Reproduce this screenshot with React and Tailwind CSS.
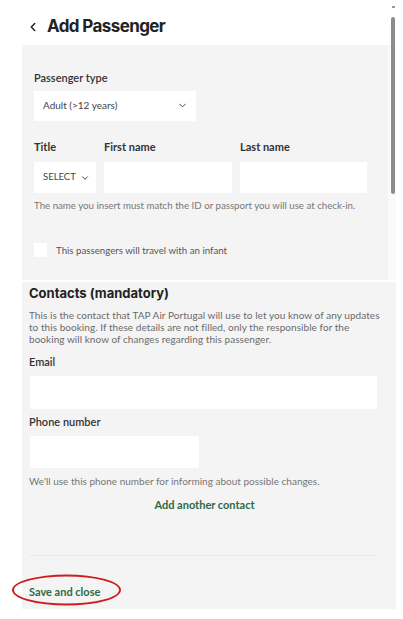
import { ChevronLeft, ChevronDown } from "lucide-react";

const lato = { fontFamily: "Lato, 'Open Sans', sans-serif" };

function Label({ children, className = "" }) {
  return <div className={`text-[11px] font-bold text-[#333] ${className}`}>{children}</div>;
}

function App() {
  return (
    <div className="relative w-[403px] h-[619px] bg-white overflow-hidden font-['Lato',sans-serif]">
      {/* scrollbar */}
      <div className="absolute left-[392px] top-[6px] w-[3px] h-[2px] bg-[#999]" />
      <div className="absolute left-[391px] top-[17px] w-[4px] h-[177px] rounded-full bg-[#8c8c8c]" />

      <div className="flex items-center bg-white pl-[26px] pt-[9px] h-[45px]">
        <ChevronLeft size={14} strokeWidth={2.5} className="text-[#222]" />
        <h1 className="ml-[7px] text-[17px] font-bold text-[#222] font-['Inter',sans-serif] tracking-[-0.6px]">
          Add Passenger
        </h1>
      </div>

      <div className="flex">
        <div className="ml-[22px] w-[366px] bg-[#f4f4f4] pl-[12px] pt-[25px] h-[235px]" style={lato}>
          <Label className="font-semibold">Passenger type</Label>
          <div className="mt-[4px] w-[162px] h-[30px] bg-white flex items-center justify-between pl-[9px] pr-[8px] text-[10px] text-[#444]">
            <span>Adult (&gt;12 years)</span>
            <ChevronDown size={11} strokeWidth={2} className="text-[#333]" />
          </div>

          <div className="mt-[18px] flex gap-[8px]">
            <div>
              <Label>Title</Label>
              <div className="mt-[7px] w-[62px] h-[31px] bg-white flex items-center pl-[9px] gap-[4px] text-[9.5px] text-[#444]">
                <span>SELECT</span>
                <ChevronDown size={10} strokeWidth={2.2} className="text-[#333]" />
              </div>
            </div>
            <div>
              <Label>First name</Label>
              <div className="mt-[7px] w-[128px] h-[31px] bg-white" />
            </div>
            <div>
              <Label>Last name</Label>
              <div className="mt-[7px] w-[127px] h-[31px] bg-white" />
            </div>
          </div>
          <p className="mt-[5px] text-[9.7px] text-[#777]">
            The name you insert must match the ID or passport you will use at check-in.
          </p>

          <div className="mt-[30px] flex items-center gap-[9px]">
            <div className="w-[13px] h-[14px] bg-white" />
            <span className="text-[9.7px] text-[#555]">This passengers will travel with an infant</span>
          </div>
        </div>
        <div className="w-[8px] bg-[#fafafa]" />
      </div>

      <div className="mt-[2px] ml-[22px] w-[374px] h-[327px] bg-[#f4f4f4] pl-[7px] pr-[16px] pt-[2px]" style={lato}>
        <h2 className="text-[13px] font-bold text-[#222] font-['Inter',sans-serif]">Contacts (mandatory)</h2>
        <p className="mt-[5px] text-[10px] leading-[12px] text-[#6b6b6b] tracking-[0.05px]">
          This is the contact that TAP Air Portugal will use to let you know of any updates to this booking. If these details are not filled, only the responsible for the booking will know of changes regarding this passenger.
        </p>
        <Label className="mt-[9px] font-semibold">Email</Label>
        <div className="mt-[6px] ml-[1px] mr-[3px] h-[33px] bg-white" />
        <Label className="mt-[5px] font-semibold">Phone number</Label>
        <div className="mt-[5px] ml-[1px] w-[169px] h-[32px] bg-white" />
        <p className="mt-[6px] text-[10px] text-[#777]">We'll use this phone number for informing about possible changes.</p>
        <div className="mt-[8px] text-center text-[11px] font-bold text-[#2d6b45]">Add another contact</div>
        <div className="mt-[42px] ml-[1px] mr-[3px] border-t border-[#e8e8e8]" />
        <div className="mt-[22px] flex">
          <div className="relative">
            <span className="text-[11px] font-bold text-[#2d6b45]">Save and close</span>
            <div className="absolute left-[-17px] top-1/2 -translate-y-1/2 w-[109px] h-[31px] rounded-[50%] border-2 border-[#d01c1c]" />
          </div>
        </div>
      </div>
    </div>
  );
}

export default App;
